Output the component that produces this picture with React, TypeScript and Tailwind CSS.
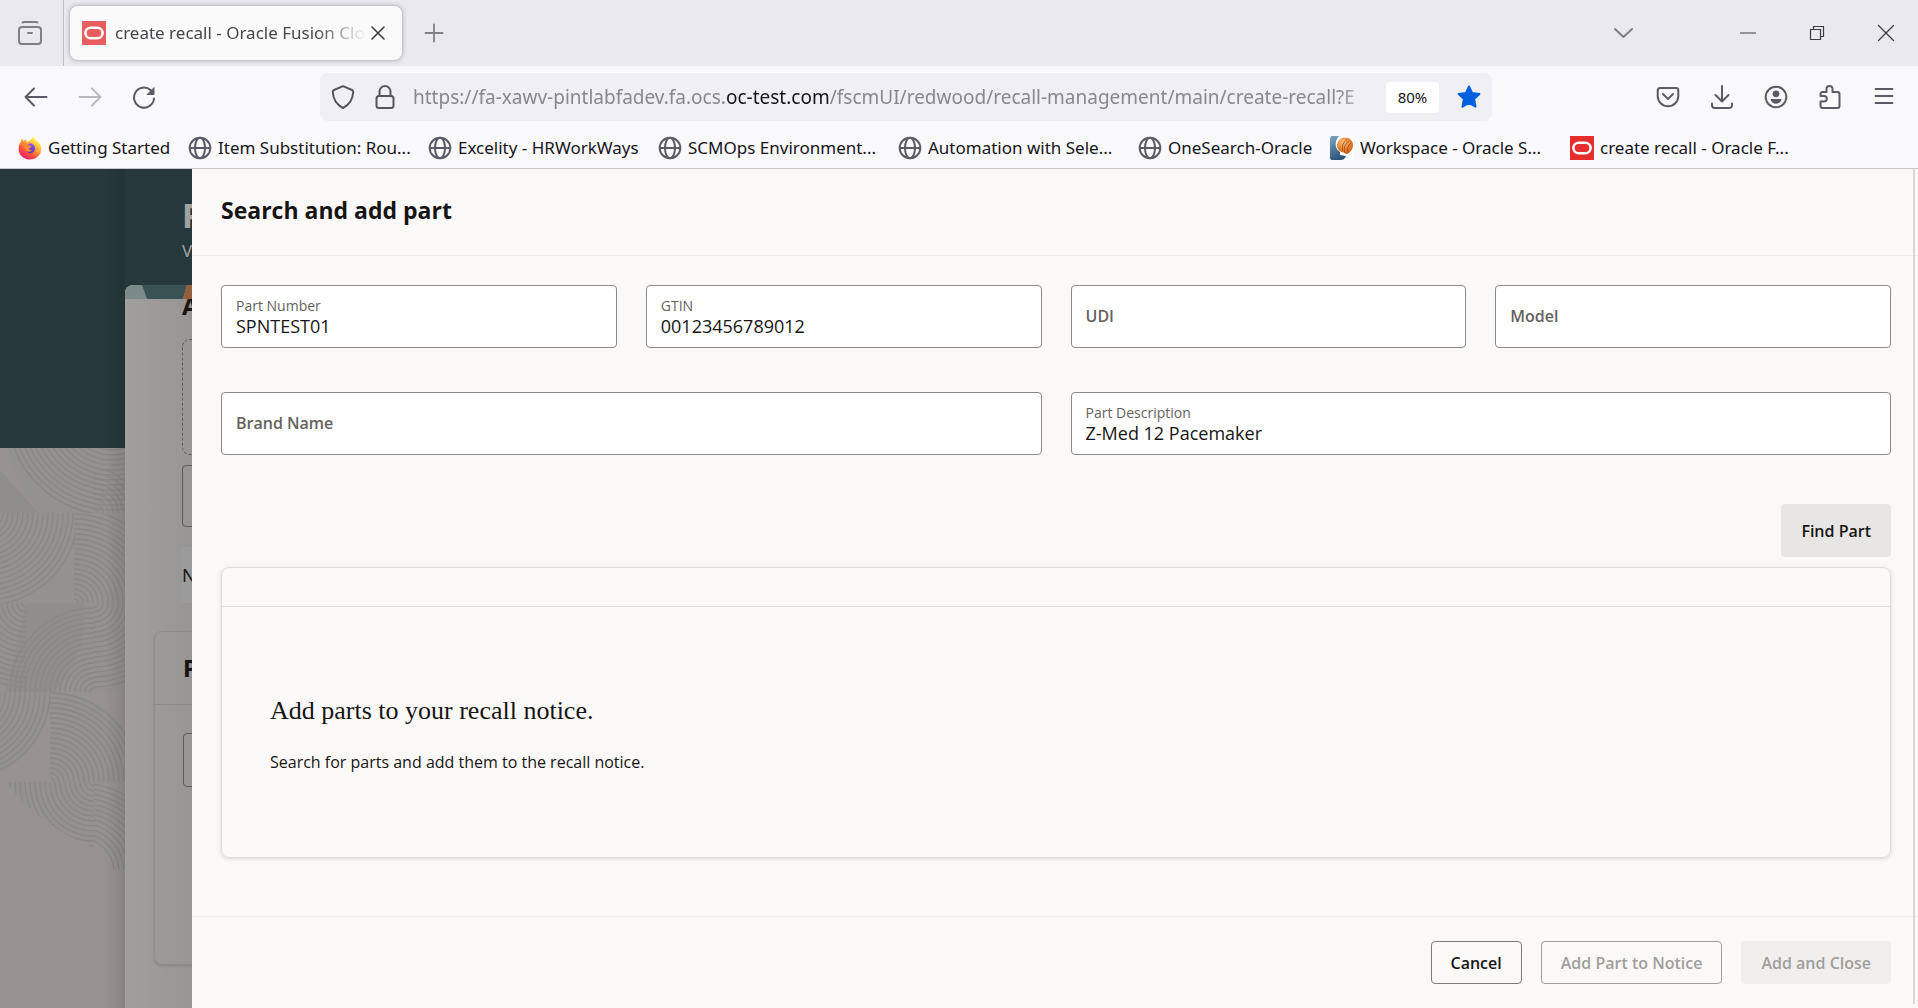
import type { ReactNode } from 'react'

type IconProps = { className?: string; children: ReactNode }

function Icon({ className = 'size-6 text-[#5b5b66]', children }: IconProps) {
  return (
    <svg
      viewBox="0 0 24 24"
      className={`shrink-0 ${className}`}
      fill="none"
      stroke="currentColor"
      strokeWidth="2"
      strokeLinecap="round"
      strokeLinejoin="round"
      aria-hidden="true"
    >
      {children}
    </svg>
  )
}

function OracleIcon({ className }: { className: string }) {
  return (
    <svg viewBox="0 0 24 24" className={`size-6 shrink-0 ${className}`} aria-hidden="true">
      <rect width="24" height="24" fill="currentColor" />
      <rect x="3.4" y="6.8" width="17.2" height="10.4" rx="5.2" fill="none" stroke="#fff" strokeWidth="2.6" />
    </svg>
  )
}

function GlobeIcon() {
  return (
    <Icon>
      <circle cx="12" cy="12" r="10.3" />
      <ellipse cx="12" cy="12" rx="5" ry="10.3" />
      <path d="M2 12h20" />
    </Icon>
  )
}

function FirefoxIcon() {
  return (
    <svg viewBox="0 0 24 24" className="size-6 shrink-0" aria-hidden="true">
      <defs>
        <linearGradient id="fox" x1="0.85" y1="0.05" x2="0.2" y2="1">
          <stop offset="0.1" stopColor="#fff44f" />
          <stop offset="0.4" stopColor="#ffa436" />
          <stop offset="0.7" stopColor="#ff4b3e" />
          <stop offset="1" stopColor="#e31587" />
        </linearGradient>
        <linearGradient id="foxGlobe" x1="0.7" y1="0" x2="0.3" y2="1">
          <stop offset="0" stopColor="#9059ff" />
          <stop offset="1" stopColor="#4a2bb8" />
        </linearGradient>
      </defs>
      <path
        d="M15.6.4c.4 1.900 1.500 2.900 3 4.200 2.900 2.200 4.600 5 4.600 8.500 0 6-4.900 10.500-11.200 10.500S.6 19 .6 13c0-3.200 1-5.700 2.400-7.500l.5-3 2 2.200c.9-.6 1.900-1 3-1.200L8.200 6c2-.6 3.400-1 4.300-2.100C13.600 2.800 14.300 1.500 15.600.4z"
        fill="url(#fox)"
      />
      <circle cx="12.300" cy="12.300" r="4.800" fill="url(#foxGlobe)" />
      <path d="M5.500 9.200c2-1.400 4.500-.9 5.900.4l2.300.3c-.2 1.300-1.700 1.800-2.400 2.200-.4 1.500 1.200 2.600 3.200 2-1.600 2.600-6.300 2.100-7.600-1.200z" fill="#ff8a2b" />
    </svg>
  )
}

function WorkspaceIcon() {
  return (
    <svg viewBox="0 0 24 24" className="size-6 shrink-0" aria-hidden="true">
      <defs>
        <linearGradient id="face" x1="0" y1="0" x2="0.3" y2="1">
          <stop offset="0" stopColor="#7fa6c4" />
          <stop offset="1" stopColor="#2f557d" />
        </linearGradient>
        <radialGradient id="ball" cx="0.4" cy="0.3" r="0.8">
          <stop offset="0" stopColor="#ffc183" />
          <stop offset="0.6" stopColor="#e87a25" />
          <stop offset="1" stopColor="#b9541a" />
        </radialGradient>
      </defs>
      <rect width="24" height="24" rx="2" fill="#fff" />
      <path d="M1 0h8C6 3 5 7 6 11c1 3 3 4 4 5v3l6 1-1 2c-1 1-2 2-4 2H2c-1 0-2-1-2-2V2z" fill="url(#face)" />
      <path d="M15 1.500c5 0 8 3.500 8 7.500s-3 8.500-7 9l-2-1.500C9.500 16 7 13 7 9.500s3-8 8-8z" fill="url(#ball)" />
      <path d="M15 17c-2-4 0-9 4-12M12.500 14c-1-4 1-8 5-11M18 15.500c-1-3 0-6 3-8.500" fill="none" stroke="#8e4a1c" strokeWidth="0.8" />
    </svg>
  )
}

const bookmarks = [
  { title: 'Getting Started', icon: <FirefoxIcon />, width: 'w-[170px]' },
  { title: 'Item Substitution: Rou...', icon: <GlobeIcon />, width: 'w-[240px]' },
  { title: 'Excelity - HRWorkWays', icon: <GlobeIcon />, width: 'w-[230px]' },
  { title: 'SCMOps Environment...', icon: <GlobeIcon />, width: 'w-[240px]' },
  { title: 'Automation with Sele...', icon: <GlobeIcon />, width: 'w-[240px]' },
  { title: 'OneSearch-Oracle', icon: <GlobeIcon />, width: 'w-[192px]' },
  { title: 'Workspace - Oracle S...', icon: <WorkspaceIcon />, width: 'w-[240px]' },
  { title: 'create recall - Oracle F...', icon: <OracleIcon className="text-[#e52d2d]" />, width: 'w-[240px]' },
]

function TabStrip() {
  return (
    <div className="flex h-[66px] items-center bg-[#eae9ee]">
      <button aria-label="Recent browsing" className="flex h-full w-16 items-center border-r border-[#bfbfc6] pl-[18px]">
        <Icon className="size-6 text-[#7f7f88]">
          <path d="M4.500 1.500 6 1h12l1.500.5" />
          <rect x="1" y="6" width="22" height="17" rx="3" />
          <path d="M10 12h4" />
        </Icon>
      </button>
      <div className="ml-[6px] flex h-[54px] w-[332px] items-center rounded-lg bg-[#fafafa] pl-3 pr-4 shadow-[0_0_5px_rgba(0,0,0,0.35)]">
        <OracleIcon className="text-[#e85d5d]" />
        <span className="ml-[9px] flex-1 overflow-hidden whitespace-nowrap text-[17px] text-[#48484c] mask-r-from-80% mask-r-to-100%">
          create recall - Oracle Fusion Clou
        </span>
        <button aria-label="Close tab" className="ml-1">
          <Icon className="size-4 text-[#3c3c42]">
            <path d="M3 3l18 18M21 3 3 21" strokeWidth="2.400" />
          </Icon>
        </button>
      </div>
      <button aria-label="New tab" className="ml-5">
        <Icon className="size-6 text-[#7f7f88]">
          <path d="M12 3.500v17M3.500 12h17" strokeWidth="1.800" />
        </Icon>
      </button>
      <div className="ml-auto flex items-center pr-5">
        <button aria-label="List all tabs" className="mr-[101px]">
          <Icon className="size-6 text-[#7f7f88]">
            <path d="M4 8l8.500 8L21 8" />
          </Icon>
        </button>
        <button aria-label="Minimize" className="mr-[45px]">
          <Icon className="size-6 text-[#3c3c42]">
            <path d="M4.500 12h15" strokeWidth="1.200" />
          </Icon>
        </button>
        <button aria-label="Restore" className="mr-[45px]">
          <Icon className="size-6 text-[#3c3c42]">
            <path d="M5.500 8.500h10v10h-10zM8.500 8.500v-3h10v10h-3" strokeWidth="1.200" strokeLinejoin="miter" />
          </Icon>
        </button>
        <button aria-label="Close window">
          <Icon className="size-6 text-[#3c3c42]">
            <path d="M4.500 4.500l15 15M19.500 4.500l-15 15" strokeWidth="1.300" />
          </Icon>
        </button>
      </div>
    </div>
  )
}

function Toolbar() {
  return (
    <div className="flex h-[62px] items-center pl-6 pr-[22px]">
      <button aria-label="Back">
        <Icon>
          <path d="M22.500 12h-21M10 3.500 1.500 12l8.500 8.500" />
        </Icon>
      </button>
      <button aria-label="Forward" className="ml-[30px]" disabled>
        <Icon className="size-6 text-[#b9b9bf]">
          <path d="M1.500 12h21M14 3.500l8.500 8.500-8.500 8.500" />
        </Icon>
      </button>
      <button aria-label="Reload" className="ml-[30px]">
        <Icon>
          <path d="M22 13.500A10 10 0 1 1 18.500 5l2.500 2.500" />
          <path d="M22 3v6.500h-6.500z" fill="currentColor" strokeWidth="1" />
        </Icon>
      </button>
      <div className="ml-[164px] flex h-12 w-[1172px] items-center rounded-lg bg-[#f0eff4] pl-[11px] pr-[11px]">
        <Icon className="size-6 text-[#55555c]">
          <path d="M12 1.200 21 5c1 .4 1.300 1 1.200 2-.4 8-3.200 12.500-10.200 16C5 19.500 2.200 15 1.800 7 1.700 6 2 5.400 3 5z" />
        </Icon>
        <Icon className="ml-[18px] size-6 text-[#55555c]">
          <rect x="3.500" y="11" width="17" height="12" rx="2.500" />
          <path d="M6.500 11V6.500a5.500 5.500 0 0 1 11 0V11" />
        </Icon>
        <div className="ml-4 flex-1 overflow-hidden whitespace-nowrap text-[19px] text-[#87878c] mask-r-from-96% mask-r-to-100%">
          https://fa-xawv-pintlabfadev.fa.ocs.<span className="text-[#15141a]">oc-test.com</span>
          /fscmUI/redwood/recall-management/main/create-recall?E
        </div>
        <button className="ml-2 h-[31px] w-[53px] rounded bg-white text-[15px] text-[#15141a]">80%</button>
        <button aria-label="Edit bookmark" className="ml-[18px]">
          <Icon className="size-6 text-[#0061e0]">
            <path d="M12 1.500l3.200 6.600 7.200.9-5.300 5 1.400 7.700L12 18l-6.500 3.700L6.900 14 1.600 9l7.200-.9z" fill="currentColor" />
          </Icon>
        </button>
      </div>
      <div className="ml-auto flex items-center gap-[30px]">
        <button aria-label="Save to Pocket">
          <Icon>
            <path d="M4 3h16a2.300 2.300 0 0 1 2.300 2.300V11a10.300 10.300 0 0 1-20.600 0V5.300A2.300 2.300 0 0 1 4 3z" />
            <path d="M7 9l5 5 5-5" />
          </Icon>
        </button>
        <button aria-label="Downloads">
          <Icon>
            <path d="M12 1v15M5.500 10l6.500 6.500L18.500 10M2 18.500v1.700A2.800 2.800 0 0 0 4.800 23h14.400a2.800 2.800 0 0 0 2.800-2.800v-1.700" />
          </Icon>
        </button>
        <button aria-label="Account">
          <Icon>
            <circle cx="12" cy="12" r="10.300" />
            <circle cx="12" cy="8.800" r="3.400" fill="currentColor" stroke="none" />
            <path d="M6.500 14h11c-.6 3-2.600 4.700-5.500 4.700S7.100 17 6.500 14z" fill="currentColor" stroke="none" />
          </Icon>
        </button>
        <button aria-label="Extensions">
          <Icon>
            <path d="M4.500 7h4V4a3 3 0 0 1 6 0v3h5a2 2 0 0 1 2 2v12a2 2 0 0 1-2 2h-15a2 2 0 0 1-2-2v-4.500h3.500a2.800 2.800 0 0 0 0-5.600H2.500V9a2 2 0 0 1 2-2z" />
          </Icon>
        </button>
        <button aria-label="Open menu">
          <Icon>
            <path d="M3.500 4h17M3.500 11h17M3.500 18h17" strokeWidth="1.800" />
          </Icon>
        </button>
      </div>
    </div>
  )
}

function BookmarksBar() {
  return (
    <nav className="flex h-10 items-center pl-[18px]">
      {bookmarks.map((b) => (
        <a key={b.title} href="#" className={`flex shrink-0 items-center gap-[6px] whitespace-nowrap text-[17px] text-[#15141a] ${b.width}`}>
          {b.icon}
          {b.title}
        </a>
      ))}
    </nav>
  )
}

// Concentric arcs, each set cut to its own tile.
const arcTiles = [
  { x: 0, y: 0, w: 125, h: 65, cx: 112, cy: -38, from: 30, to: 108 },
  { x: 94, y: 22, w: 31, h: 43, cx: 94, cy: 65, from: 4, to: 44 },
  { x: 0, y: 65, w: 75, h: 90, cx: -14, cy: 65, from: 12, to: 92 },
  { x: 74, y: 65, w: 51, h: 90, cx: 74, cy: 155, from: 4, to: 94 },
  { x: 0, y: 155, w: 26, h: 89, cx: 26, cy: 155, from: 4, to: 84 },
  { x: 6, y: 155, w: 88, h: 89, cx: 94, cy: 244, from: 4, to: 88 },
  { x: 94, y: 155, w: 31, h: 89, cx: 94, cy: 155, from: 4, to: 84 },
  { x: 0, y: 244, w: 50, h: 90, cx: -36, cy: 244, from: 36, to: 88 },
  { x: 50, y: 244, w: 75, h: 90, cx: 50, cy: 334, from: 4, to: 90 },
  { x: 6, y: 334, w: 88, h: 66, cx: 94, cy: 334, from: 4, to: 88 },
  { x: 94, y: 334, w: 31, h: 88, cx: 80, cy: 424, from: 34, to: 90 },
]

function PageTexture() {
  return (
    <svg viewBox="0 0 125 560" preserveAspectRatio="xMinYMin slice" className="min-h-0 w-full flex-1 bg-[#969290]" aria-hidden="true">
      <path d="M8 0h117v65H40C28 45 14 30 8 0zM0 65h125v179H0z" fill="#93928f" />
      <path d="M0 244h52c-4 36-22 60-52 78zM50 244c30 0 60 14 75 40v50H50z" fill="#93928f" />
      <path d="M6 334h119v88c-8-12-18-22-34-30C60 380 30 362 6 334z" fill="#93928f" />
      <path d="M0 22l38 43H0zM26 155h58c2 40-10 70-30 89H6z" fill="#8f8e8b" />
      {arcTiles.map((t, i) => {
        const count = Math.floor((t.to - t.from) / 5) + 1
        return (
          <g key={i}>
            <clipPath id={`tile${i}`}>
              {i === 9 ? (
                <path d="M6 334h88v66C60 386 26 362 6 334z" />
              ) : (
                <rect x={t.x} y={t.y} width={t.w} height={t.h} />
              )}
            </clipPath>
            <g clipPath={`url(#tile${i})`} fill="none" stroke="#898885" strokeWidth="1.300">
              {Array.from({ length: count }, (_, n) => (
                <circle key={n} cx={t.cx} cy={t.cy} r={t.from + n * 5} />
              ))}
            </g>
          </g>
        )
      })}
    </svg>
  )
}

function DimmedPage() {
  return (
    <div className="flex w-48 shrink-0 overflow-hidden bg-[#26383b]" aria-hidden="true">
      <div className="relative flex w-[125px] shrink-0 flex-col">
        <div className="h-[279px] shrink-0" />
        <PageTexture />
        <div className="absolute inset-y-0 right-0 w-5 bg-linear-to-r from-transparent to-black/10" />
      </div>
      <div className="flex min-w-0 flex-1 flex-col overflow-hidden">
        <div className="h-[116px] shrink-0 pl-[57px] pt-[26px] text-[#a3a29f]">
          <div className="text-[34px] leading-10 font-bold">P</div>
          <div className="mt-1 text-[17px] leading-6">V</div>
        </div>
        <div className="flex flex-1 flex-col overflow-hidden rounded-tl-lg bg-linear-to-r from-[#a09f9d] to-[#979694]">
          <svg viewBox="0 0 67 14" className="h-[14px] w-[67px] shrink-0">
            <path d="M0 0h17l5 14H0z" fill="#7b8a89" />
            <path d="M17 0h45l-4 14H22z" fill="#3a5251" />
            <path d="M62 0h5v14h-9z" fill="#955f3d" />
          </svg>
          <div className="h-10 shrink-0 overflow-hidden pl-[57px] text-[24px] leading-5 font-bold text-[#161513]">
            <div className="-mt-[3px]">A</div>
          </div>
          <div className="ml-[57px] h-[116px] w-40 shrink-0 rounded-lg border border-dashed border-[#5f5e5c]" />
          <div className="mt-[10px] ml-[57px] h-[62px] w-40 shrink-0 rounded border border-[#5c5b5a]" />
          <div className="mt-5 ml-[57px] h-[56px] w-40 shrink-0 bg-[#9b9b9b] pt-4 text-[18px] leading-6 text-[#161513]">N</div>
          <div className="mt-7 ml-[29px] flex h-[334px] w-60 shrink-0 flex-col rounded-lg border border-[#8d8c8a] shadow-sm">
            <div className="h-[73px] border-b border-[#8d8c8a] pt-5 pl-7 text-[24px] leading-8 font-bold text-[#161513]">P</div>
            <div className="mt-7 ml-7 h-[54px] w-40 rounded border border-[#5c5b5a]" />
          </div>
        </div>
      </div>
    </div>
  )
}

type FieldProps = { id: string; label: string; value?: string; wide?: boolean }

function Field({ id, label, value = '', wide = false }: FieldProps) {
  return (
    <div className={wide ? 'relative col-span-2' : 'relative'}>
      <input
        id={id}
        defaultValue={value}
        className="block h-[63px] w-full rounded border border-[#8b8a88] bg-white px-[14px] pt-[18px] text-[18px] leading-6 text-[#161513]"
      />
      <label
        htmlFor={id}
        className={
          value
            ? 'absolute top-3 left-[15px] text-[14px] leading-[18px] font-medium text-[#65625e]'
            : 'absolute top-[19px] left-[15px] text-[16px] leading-6 font-semibold text-[#65625e]'
        }
      >
        {label}
      </label>
    </div>
  )
}

function SearchDrawer() {
  return (
    <main className="relative flex min-w-0 flex-1 flex-col bg-[#fbf9f8] font-['Open_Sans','Noto_Sans',sans-serif] text-[#161513]">
      <header className="flex h-[87px] shrink-0 items-center border-b border-[#eeedec] px-[29px] pb-1">
        <h1 className="text-[23px] font-bold">Search and add part</h1>
      </header>

      <section className="flex flex-1 flex-col pr-[27px] pl-[29px] pt-[29px]">
        <form className="grid grid-cols-4 gap-x-[29px] gap-y-11">
          <Field id="part-number" label="Part Number" value="SPNTEST01" />
          <Field id="gtin" label="GTIN" value="00123456789012" />
          <Field id="udi" label="UDI" />
          <Field id="model" label="Model" />
          <Field id="brand-name" label="Brand Name" wide />
          <Field id="part-description" label="Part Description" value="Z-Med 12 Pacemaker" wide />
        </form>

        <button className="mt-[49px] h-[53px] self-end rounded bg-[#e8e6e5] px-5 text-[16px] font-semibold">Find Part</button>

        <div className="mt-[10px] rounded-lg border border-[#dedddb] shadow-[0_1px_4px_rgba(0,0,0,0.12)]">
          <div className="h-[39px] border-b border-[#dedddb]" />
          <div className="h-[250px] px-12 pt-[88px]">
            <h2 className="font-['Liberation_Serif',serif] text-[26px] leading-8">Add parts to your recall notice.</h2>
            <p className="mt-[23px] text-[16px] leading-6">Search for parts and add them to the recall notice.</p>
          </div>
        </div>
      </section>

      <footer className="flex h-[92px] shrink-0 items-start justify-end gap-[19px] border-t border-[#eeedec] pt-6 pr-[27px] text-[16px] font-semibold">
        <button className="h-[43px] rounded border border-[#7d7c7a] px-[19px]">Cancel</button>
        <button disabled className="h-[43px] rounded border border-[#a09f9d] px-[19px] text-[#a09e9b]">
          Add Part to Notice
        </button>
        <button disabled className="h-[43px] rounded bg-[#f1efee] px-5 text-[#a09e9b]">
          Add and Close
        </button>
      </footer>

      <div className="absolute top-0 right-[3px] bottom-1 w-[2px] bg-[#d9d8d7]" />
    </main>
  )
}

export default function App() {
  return (
    <div className="flex h-screen flex-col overflow-hidden font-['Noto_Sans','Open_Sans',sans-serif]">
      <header className="shrink-0 border-b border-[#c8c8cc] bg-[#f9f9fb]">
        <TabStrip />
        <Toolbar />
        <BookmarksBar />
      </header>
      <div className="flex min-h-0 flex-1">
        <DimmedPage />
        <SearchDrawer />
      </div>
    </div>
  )
}
